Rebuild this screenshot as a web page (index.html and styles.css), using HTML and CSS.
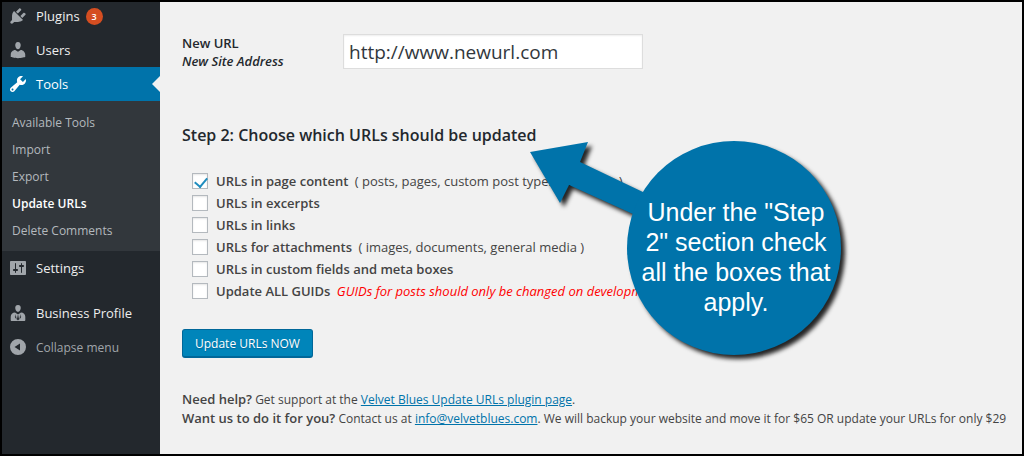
FILE: index.html
```html
<!doctype html>
<html lang="en">
	<head>
		<meta charset="UTF-8" />
		<meta name="viewport" content="width=device-width, initial-scale=1.0" />
		<title>Update URLs</title>
		<link rel="stylesheet" href="styles.css">
	</head>
	<body>
		<nav class="sidebar">
			<ul class="menu">
				<li>
					<a class="menu-item" href="#plugins">
						<svg class="icon" viewBox="0 0 20 20"><path d="M13.11 4.36L9.87 7.6 8 5.73l3.24-3.24c.35-.34 1.05-.2 1.56.32.52.51.66 1.21.31 1.55zm-8 1.77l.91-1.12 9.01 9.01-1.19.84c-.71.71-2.63 1.16-3.82 1.16H6.14L4.9 17.26c-.59.59-1.54.59-2.12 0-.59-.58-.59-1.53 0-2.12l1.24-1.24v-3.88c0-1.13.4-3.19 1.09-3.89zm7.26 3.97l3.24-3.24c.34-.35 1.04-.21 1.55.31.52.51.66 1.21.31 1.55l-3.24 3.25z" /></svg>
						Plugins <span class="count">3</span>
					</a>
				</li>
				<li>
					<a class="menu-item" href="#users">
						<svg class="icon" viewBox="0 0 20 20"><path d="M10 9.25c-2.27 0-2.73-3.44-2.73-3.44C7 4.02 7.82 2 9.97 2c2.16 0 2.98 2.02 2.71 3.81 0 0-.41 3.44-2.68 3.44zm0 2.57L12.72 10c2.39 0 4.52 2.33 4.52 4.53v2.49s-3.65 1.13-7.24 1.13c-3.65 0-7.24-1.13-7.24-1.13v-2.49c0-2.25 1.94-4.48 4.47-4.48z" /></svg>
						Users
					</a>
				</li>
				<li>
					<a class="menu-item current" href="#tools">
						<svg class="icon" viewBox="0 0 20 20"><path d="M16.68 9.77c-1.34 1.34-3.3 1.67-4.95.99l-5.41 6.52c-.99.99-2.59.99-3.58 0s-.99-2.59 0-3.57l6.52-5.42c-.68-1.65-.35-3.61.99-4.95 1.28-1.28 3.12-1.62 4.72-1.06l-2.89 2.89 2.82 2.82 2.86-2.87c.53 1.58.18 3.39-1.08 4.65zM3.81 16.21c.4.39 1.04.39 1.43 0 .4-.4.4-1.04 0-1.43-.39-.4-1.03-.4-1.43 0-.39.39-.39 1.03 0 1.43z" /></svg>
						Tools
					</a>
					<ul class="submenu">
						<li><a href="#available">Available Tools</a></li>
						<li><a href="#import">Import</a></li>
						<li><a href="#export">Export</a></li>
						<li><a class="active" href="#update">Update URLs</a></li>
						<li><a href="#comments">Delete Comments</a></li>
					</ul>
				</li>
				<li>
					<a class="menu-item" href="#settings">
						<svg class="icon" viewBox="0 0 20 20"><path d="M18 16V4c0-.55-.45-1-1-1H3c-.55 0-1 .45-1 1v12c0 .55.45 1 1 1h14c.55 0 1-.45 1-1zM8 11h1c.55 0 1 .45 1 1s-.45 1-1 1H8v1.5c0 .28-.22.5-.5.5s-.5-.22-.5-.5V13H6c-.55 0-1-.45-1-1s.45-1 1-1h1V5.5c0-.28.22-.5.5-.5s.5.22.5.5V11zm5-2h-1c-.55 0-1-.45-1-1s.45-1 1-1h1V5.5c0-.28.22-.5.5-.5s.5.22.5.5V7h1c.55 0 1 .45 1 1s-.45 1-1 1h-1v5.5c0 .28-.22.5-.5.5s-.5-.22-.5-.5V9z" /></svg>
						Settings
					</a>
				</li>
				<li class="separated">
					<a class="menu-item" href="#profile">
						<svg class="icon" viewBox="0 0 20 20"><path fill-rule="evenodd" d="M10 8.800c-2.200 0-2.700-3.300-2.700-3.300C7 3.700 7.800 2 10 2s3 1.700 2.700 3.500c0 0-.5 3.300-2.700 3.300zM7 9.600l3 2 3-2c2.400 0 4.300 2 4.300 4.200V17c0 .6-.5 1-1 1H3.700c-.6 0-1-.4-1-1v-3.200C2.700 11.600 4.600 9.600 7 9.600zM9.200 12.200l.4 1-.7 3 1.100 1.300 1.100-1.300-.7-3 .4-1-.8.500zM7 11l.5 2.500-.8.300 1.900 3-.5-3.500zM13 11l-.5 2.500.8.300-1.900 3 .5-3.500z" /></svg>
						Business Profile
					</a>
				</li>
				<li>
					<button class="menu-item collapse" type="button">
						<svg class="icon" viewBox="0 0 20 20"><path fill-rule="evenodd" d="M10 2a8 8 0 1 0 0 16 8 8 0 0 0 0-16zm2 4.500v7L6.500 10z" /></svg>
						Collapse menu
					</button>
				</li>
			</ul>
		</nav>

		<main class="content">
			<form>
				<div class="field-row">
					<label for="newurl">New URL<em>New Site Address</em></label>
					<input type="text" id="newurl" value="http://www.newurl.com" />
				</div>

				<h2>Step 2: Choose which URLs should be updated</h2>
				<div class="options">
					<label><input type="checkbox" checked /><span><b>URLs in page content</b> ( posts, pages, custom post types, revisions )</span></label>
					<label><input type="checkbox" /><b>URLs in excerpts</b></label>
					<label><input type="checkbox" /><b>URLs in links</b></label>
					<label><input type="checkbox" /><span><b>URLs for attachments</b> ( images, documents, general media )</span></label>
					<label><input type="checkbox" /><b>URLs in custom fields and meta boxes</b></label>
					<label><input type="checkbox" /><span><b>Update ALL GUIDs</b> <em>GUIDs for posts should only be changed on development</em></span></label>
				</div>
				<button class="submit" type="button">Update URLs NOW</button>
			</form>

			<p class="help">
				<b>Need help?</b> Get support at the <a href="#plugin">Velvet Blues Update URLs plugin page</a>.<br />
				<b>Want us to do it for you?</b> Contact us at <a href="mailto:info@velvetblues.com">info@velvetblues.com</a>. We will backup your website and move it for $65 OR update your URLs for only $29
			</p>

			<!-- arrow bubble over the form -->
			<aside class="callout">
				<svg viewBox="0 0 330 230">
					<path d="M4 15L62 5L54 25L140 66V92L43 48L34 66Z" />
					<circle cx="208" cy="111" r="107" />
				</svg>
				<p>Under the "Step 2" section check all the boxes that apply.</p>
			</aside>
		</main>
	</body>
</html>
```

FILE: styles.css
```css
:root {
	--blue: #0073aa;
	--page: #f1f1f1;
	--dark: #23282d;
	--submenu: #32373c;
	--text: #444;
}

* {
	box-sizing: border-box;
}

body {
	display: flex;
	margin: 0;
	min-height: 100vh;
	border: 2px solid #000;
	background: var(--page);
	color: var(--text);
	font-family: 'Segoe UI', 'Open Sans', 'Noto Sans', sans-serif;
	font-size: 13px;
	line-height: 19px;
	overflow: hidden;
}

b {
	font-weight: 600;
}

/* admin menu */
.sidebar {
	flex: 0 0 158px;
	background: var(--dark);
}

.sidebar ul {
	list-style: none;
	margin: 0;
	padding: 0;
}

.sidebar .menu {
	margin-top: -3px;
}

.menu-item {
	position: relative;
	display: flex;
	align-items: center;
	gap: 8px;
	width: 100%;
	height: 34px;
	padding: 0 6px;
	color: #eee;
	font-size: 13px;
	text-decoration: none;
}

.icon {
	width: 20px;
	height: 20px;
	fill: #a0a5aa;
}

.current {
	background: var(--blue);
	color: #fff;
}

.current .icon {
	fill: #fff;
}

.current::after {
	content: '';
	position: absolute;
	right: 0;
	top: 9px;
	border: 8px solid transparent;
	border-left: 0;
	border-right-color: var(--page);
}

.count {
	width: 17px;
	height: 17px;
	margin-left: -2px;
	border-radius: 50%;
	background: #d54e21;
	color: #fff;
	font-size: 9px;
	font-weight: 600;
	line-height: 17px;
	text-align: center;
}

.sidebar .submenu {
	padding: 8px 10px 7px;
	background: var(--submenu);
}

.submenu a {
	display: block;
	color: #b4b9be;
	font-size: 12px;
	line-height: 27px;
	text-decoration: none;
}

.submenu .active {
	color: #fff;
	font-weight: 600;
}

.separated {
	margin-top: 11px;
}

.collapse {
	border: 0;
	background: none;
	color: #a0a5aa;
	font-family: inherit;
	font-size: 12px;
}

/* settings form */
.content {
	position: relative;
	flex: 1;
	min-width: 0;
	padding: 32px 0 20px 22px;
	white-space: nowrap;
	overflow: hidden;
}

.field-row {
	display: flex;
}

.field-row label {
	width: 161px;
	color: var(--dark);
	font-weight: 600;
	line-height: 18px;
}

.field-row em {
	display: block;
}

.field-row input {
	width: 300px;
	height: 35px;
	padding: 3px 5px;
	border: 1px solid #ddd;
	background: #fff;
	box-shadow: inset 0 1px 2px rgba(0, 0, 0, 0.07);
	color: #32373c;
	font-family: inherit;
	font-size: 19px;
}

h2 {
	margin: 53px 0 23px;
	color: var(--dark);
	font-size: 16px;
	font-weight: 600;
	line-height: 24px;
}

.options {
	padding-left: 10px;
}

.options label {
	display: flex;
	align-items: center;
	gap: 8px;
	height: 22px;
}

.options span b {
	margin-right: 3px;
}

.options em {
	color: #f00;
}

.options input {
	appearance: none;
	width: 16px;
	height: 16px;
	margin: 0;
	border: 1px solid #b4b9be;
	background: #fff;
	box-shadow: inset 0 1px 2px rgba(0, 0, 0, 0.1);
}

.options input:checked::before {
	content: '';
	display: block;
	width: 6px;
	height: 10px;
	margin: 1px 4px;
	border: solid #1e8cbe;
	border-width: 0 2px 2px 0;
	transform: rotate(40deg);
}

.submit {
	display: block;
	height: 29px;
	margin-top: 27px;
	padding: 0 12px;
	border: 1px solid #006799;
	border-bottom-width: 2px;
	border-radius: 3px;
	background: #0085ba;
	color: #fff;
	font-family: inherit;
	font-size: 12px;
	text-shadow: 0 1px 1px #006799;
}

.help {
	margin: 32px 0 0;
	font-size: 12px;
}

.help b {
	font-size: 13px;
}

.help a {
	color: var(--blue);
}

/* callout */
.callout {
	position: absolute;
	left: 366px;
	top: 135px;
	width: 330px;
	color: #fff;
	white-space: normal;
}

.callout svg {
	display: block;
	fill: var(--blue);
	filter: drop-shadow(4px 4px 2px rgba(0, 0, 0, 0.85));
}

.callout p {
	position: absolute;
	left: 110px;
	top: 60px;
	width: 200px;
	margin: 0;
	font-family: 'Liberation Sans', Arial, sans-serif;
	font-size: 25px;
	line-height: 30px;
	text-align: center;
}
```
